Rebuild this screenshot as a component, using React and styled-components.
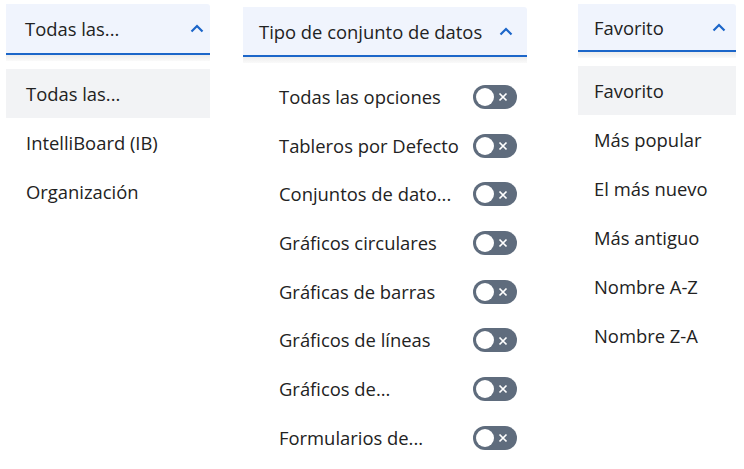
import styled, { createGlobalStyle } from 'styled-components';

const GlobalStyle = createGlobalStyle`
  body {
    margin: 0;
    background: #ffffff;
    font-family: "Segoe UI", "Open Sans", "Noto Sans", sans-serif;
    color: #222222;
  }
`;

const Page = styled.div`
  display: flex;
  align-items: flex-start;
  padding-left: 6px;
  width: 744px;
  height: 469px;
  overflow: hidden;
`;

const Panel = styled.div`
  display: flex;
  flex-direction: column;
  width: ${(p) => p.$width}px;
  margin-top: ${(p) => p.$top}px;
  margin-left: ${(p) => p.$left}px;
`;

const Header = styled.div`
  display: flex;
  align-items: center;
  justify-content: space-between;
  height: ${(p) => p.$height}px;
  padding: 0 ${(p) => p.$padRight}px 0 ${(p) => p.$padLeft}px;
  background: #f0f4fd;
  border-bottom: 2px solid #1c66c9;
  border-radius: 0 3px 0 0;
  font-size: 18.4px;
  white-space: nowrap;
`;

const Shade = styled.div`
  height: 6px;
  background: linear-gradient(#ececec, #fafafa);
`;

const List = styled.ul`
  list-style: none;
  margin: ${(p) => p.$gap}px 0 0;
  padding: 0;
`;

const Item = styled.li`
  display: flex;
  align-items: center;
  height: 49px;
  padding-left: ${(p) => p.$pad}px;
  font-size: 18.4px;
  background: ${(p) => (p.$active ? '#f2f3f5' : 'transparent')};
`;

const ToggleRow = styled.li`
  display: flex;
  align-items: center;
  justify-content: space-between;
  height: 48.7px;
  padding: 0 10px 0 36px;
  font-size: 18.4px;
  white-space: nowrap;
`;

const Track = styled.span`
  position: relative;
  display: inline-flex;
  align-items: center;
  flex: none;
  width: 44px;
  height: 24px;
  margin-top: 1px;
  border-radius: 12px;
  background: #5f6c7d;
`;

const Knob = styled.span`
  position: absolute;
  left: 3px;
  top: 3px;
  width: 18px;
  height: 18px;
  border-radius: 50%;
  background: #ffffff;
`;

const Cross = styled.svg`
  position: absolute;
  right: 9px;
  top: 7.5px;
`;

const Chevron = () => (
  <svg width="14" height="9" viewBox="0 0 14 9">
    <path d="M1.5 7.5 L7 2 L12.5 7.5" fill="none" stroke="#1c66c9" strokeWidth="2.2" />
  </svg>
);

const Toggle = () => (
  <Track>
    <Knob />
    <Cross width="10" height="10" viewBox="0 0 10 10">
      <path d="M1.5 1.5 L8.5 8.5 M8.5 1.5 L1.5 8.5" stroke="#ffffff" strokeWidth="1.7" />
    </Cross>
  </Track>
);

const datasets = [
  'Todas las opciones',
  'Tableros por Defecto',
  'Conjuntos de dato...',
  'Gráficos circulares',
  'Gráficas de barras',
  'Gráficos de líneas',
  'Gráficos de...',
  'Formularios de...',
];

const sorts = ['Favorito', 'Más popular', 'El más nuevo', 'Más antiguo', 'Nombre A-Z', 'Nombre Z-A'];

export default function App() {
  return (
    <>
      <GlobalStyle />
      <Page>
        <Panel $width={204} $top={4} $left={0}>
          <Header $height={49} $padLeft={19} $padRight={6}>
            <span>Todas las...</span>
            <Chevron />
          </Header>
          <Shade />
          <List $gap={8}>
            <Item $pad={20} $active>Todas las...</Item>
            <Item $pad={20}>IntelliBoard (IB)</Item>
            <Item $pad={20}>Organización</Item>
          </List>
        </Panel>

        <Panel $width={284} $top={7} $left={33}>
          <Header $height={48} $padLeft={16} $padRight={14}>
            <span>Tipo de conjunto de datos</span>
            <Chevron />
          </Header>
          <Shade />
          <List $gap={9}>
            {datasets.map((d) => (
              <ToggleRow key={d}>
                <span>{d}</span>
                <Toggle />
              </ToggleRow>
            ))}
          </List>
        </Panel>

        <Panel $width={158} $top={4} $left={51}>
          <Header $height={46} $padLeft={16} $padRight={10}>
            <span>Favorito</span>
            <Chevron />
          </Header>
          <Shade />
          <List $gap={8}>
            {sorts.map((s, i) => (
              <Item key={s} $pad={16} $active={i === 0}>
                {s}
              </Item>
            ))}
          </List>
        </Panel>
      </Page>
    </>
  );
}
